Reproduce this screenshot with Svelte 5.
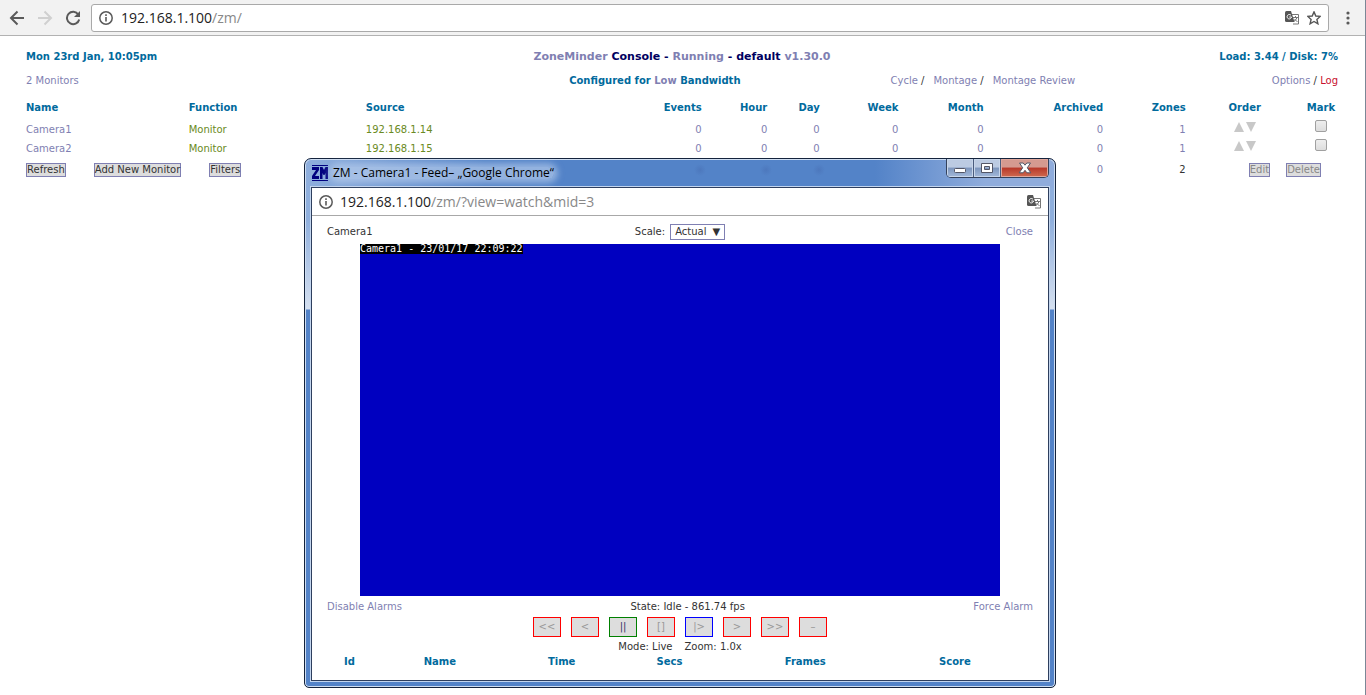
<script lang="ts">
  const monitors = [
    { id: 1, name: 'Camera1', fn: 'Monitor', source: '192.168.1.14', zones: 1 },
    { id: 2, name: 'Camera2', fn: 'Monitor', source: '192.168.1.15', zones: 1 }
  ];

  const periods = ['Events', 'Hour', 'Day', 'Week', 'Month', 'Archived'];

  const dvrControls = [
    { label: '<<', title: 'Fast Rewind', state: 'unavail' },
    { label: '<', title: 'Slow Rewind', state: 'unavail' },
    { label: '||', title: 'Pause', state: 'inactive' },
    { label: '[]', title: 'Stop', state: 'unavail' },
    { label: '|>', title: 'Play', state: 'active' },
    { label: '>', title: 'Slow Forward', state: 'unavail' },
    { label: '>>', title: 'Fast Forward', state: 'unavail' },
    { label: '–', title: 'Zoom Out', state: 'unavail' }
  ];

  let scale = 'Actual';
  let marked: number[] = [];
</script>

<div class="browser">
  <header class="toolbar">
    <button class="icon" aria-label="Back">
      <svg width="16" height="16" viewBox="0 0 16 16"><path d="M15 8H2M8.500 1.500L2 8l6.500 6.500" fill="none" stroke="#5a5a5a" stroke-width="2" /></svg>
    </button>
    <button class="icon" aria-label="Forward">
      <svg width="16" height="16" viewBox="0 0 16 16"><path d="M1 8h13M7.500 1.500L14 8l-6.500 6.500" fill="none" stroke="#d0d0d0" stroke-width="2" /></svg>
    </button>
    <button class="icon" aria-label="Reload">
      <svg width="16" height="16" viewBox="0 0 16 16"><path d="M13.300 4.500A6.200 6.200 0 1 0 14.200 9.500" fill="none" stroke="#5a5a5a" stroke-width="2" /><path d="M15 1v6H9z" fill="#5a5a5a" /></svg>
    </button>
    <div class="omnibox">
      <svg width="14" height="14" viewBox="0 0 14 14"><circle cx="7" cy="7" r="6.200" fill="none" stroke="#5a5a5a" stroke-width="1.500" /><path d="M6.200 6h1.600v4.500H6.200zM6.200 3.300h1.600v1.600H6.200z" fill="#5a5a5a" /></svg>
      <span class="url">192.168.1.100<i>/zm/</i></span>
      <button class="icon" aria-label="Translate">
        <svg width="14" height="14" viewBox="0 0 14 14"><path d="M6 3.500h7.500v9.500H8" fill="#fff" stroke="#777" /><path d="M8 6.500h5M10.500 5v1.500M12 6.500Q11.500 9 8.500 10.500M9.500 8l3 3" fill="none" stroke="#777" /><path d="M0 1.500Q0 0 1.500 0H6l3.500 11H1.500Q0 11 0 9.500z" fill="#555" /><path d="M6 4.300A2.200 2.200 0 1 0 6.500 6H4.300" fill="none" stroke="#fff" /></svg>
      </button>
      <button class="icon" aria-label="Bookmark">
        <svg width="14" height="14" viewBox="0 0 14 14"><path d="M7 .9l1.800 4.100 4.400.4-3.300 3 1 4.400L7 10.500l-3.900 2.300 1-4.400-3.300-3L5.200 5z" fill="none" stroke="#555" stroke-width="1.400" /></svg>
      </button>
    </div>
    <button class="icon" aria-label="Menu">
      <svg width="16" height="16" viewBox="0 0 16 16"><g fill="#5a5a5a"><circle cx="8" cy="3" r="1.600" /><circle cx="8" cy="8" r="1.600" /><circle cx="8" cy="13" r="1.600" /></g></svg>
    </button>
  </header>

  <main>
    <div class="row status">
      <h3>Mon 23rd Jan, 10:05pm</h3>
      <h2><a href="#zm">ZoneMinder</a> Console - <a href="#state">Running</a> - default <a href="#version">v1.30.0</a></h2>
      <h3>Load: 3.44 / Disk: 7%</h3>
    </div>
    <div class="row links">
      <a href="#monitors">2 Monitors</a>
      <h3>Configured for <a href="#bandwidth">Low</a> Bandwidth</h3>
      <div class="end">
        <nav>
          <span><a href="#cycle">Cycle</a> /</span>
          <span><a href="#montage">Montage</a> /</span>
          <a href="#review">Montage Review</a>
        </nav>
        <div><a href="#options">Options</a> / <a class="alert" href="#log">Log</a></div>
      </div>
    </div>

    <table class="console">
      <colgroup>
        <col class="name" /><col class="function" /><col class="source" /><col class="total" /><col class="hour" /><col class="day" />
        <col class="week" /><col class="month" /><col class="archived" /><col class="zones" /><col class="order" /><col class="mark" />
      </colgroup>
      <thead>
        <tr>
          <th>Name</th>
          <th>Function</th>
          <th>Source</th>
          {#each periods as period}
            <th class="num">{period}</th>
          {/each}
          <th class="num">Zones</th>
          <th class="mid">Order</th>
          <th class="mid">Mark</th>
        </tr>
      </thead>
      <tbody>
        {#each monitors as monitor}
          <tr>
            <td><a href="#watch">{monitor.name}</a></td>
            <td><a class="info" href="#function">{monitor.fn}</a></td>
            <td><a class="info" href="#source">{monitor.source}</a></td>
            {#each periods as period}
              <td class="num"><a href="#{period}">0</a></td>
            {/each}
            <td class="num"><a href="#zones">{monitor.zones}</a></td>
            <td class="mid">
              <span class="arrows">
                <button aria-label="Move {monitor.name} up"><svg width="10" height="10"><path d="M5 0l5 10H0z" fill="#c8c8c8" /></svg></button>
                <button aria-label="Move {monitor.name} down"><svg width="10" height="10"><path d="M0 0h10L5 10z" fill="#c8c8c8" /></svg></button>
              </span>
            </td>
            <td class="mid"><input type="checkbox" aria-label="Mark {monitor.name}" value={monitor.id} bind:group={marked} /></td>
          </tr>
        {/each}
      </tbody>
      <tfoot>
        <tr>
          <td colspan="3">
            <div class="buttons">
              <button>Refresh</button>
              <button>Add New Monitor</button>
              <button>Filters</button>
            </div>
          </td>
          {#each periods as period}
            <td class="num"><a href="#total-{period}">0</a></td>
          {/each}
          <td class="num">2</td>
          <td colspan="2">
            <div class="buttons edit">
              <button disabled>Edit</button>
              <button disabled>Delete</button>
            </div>
          </td>
        </tr>
      </tfoot>
    </table>
  </main>
</div>

<section class="window">
  <div class="titlebar">
    <svg width="16" height="16" viewBox="0 0 16 16"><path d="M0 0h16v1H0zM0 15h16v1H0z" fill="#00007f" /><path d="M0 2h7v3L3 11h4v3H0v-3L4 5H0zM8 2h2.500L12 5l1.500-3H16v12h-2.500V8l-1 2h-1l-1-2v6H8z" fill="#00007f" /></svg>
    <span class="caption">ZM - Camera1 - Feed– „Google Chrome“</span>
    <div class="frame-buttons">
      <button aria-label="Minimize"><svg width="12" height="12" viewBox="0 0 12 12"><rect x=".5" y="6.500" width="11" height="4" rx="1" fill="#fff" stroke="#535666" /></svg></button>
      <button aria-label="Maximize"><svg width="12" height="12" viewBox="0 0 12 12"><path d="M.5 1.500h11v9H.5zM3.500 4.500v3h5v-3z" fill="#fff" fill-rule="evenodd" stroke="#535666" /></svg></button>
      <button class="close" aria-label="Close window"><svg width="14" height="12" viewBox="0 0 14 12"><path d="M1.500 1h3.700L7 3.200 8.800 1h3.700L9.300 5.800l3.500 5H8.900L7 8.300l-1.900 2.500H1.200l3.500-5z" fill="#fff" stroke="#535666" /></svg></button>
    </div>
  </div>

  <div class="client">
    <div class="address">
      <svg width="14" height="14" viewBox="0 0 14 14"><circle cx="7" cy="7" r="6.200" fill="none" stroke="#5a5a5a" stroke-width="1.500" /><path d="M6.200 6h1.600v4.500H6.200zM6.200 3.300h1.600v1.600H6.200z" fill="#5a5a5a" /></svg>
      <span class="url">192.168.1.100<i>/zm/?view=watch&amp;mid=3</i></span>
      <button class="icon" aria-label="Translate page">
        <svg width="14" height="14" viewBox="0 0 14 14"><path d="M6 3.500h7.500v9.500H8" fill="#fff" stroke="#777" /><path d="M8 6.500h5M10.500 5v1.500M12 6.500Q11.500 9 8.500 10.500M9.500 8l3 3" fill="none" stroke="#777" /><path d="M0 1.500Q0 0 1.500 0H6l3.500 11H1.500Q0 11 0 9.500z" fill="#555" /><path d="M6 4.300A2.200 2.200 0 1 0 6.500 6H4.300" fill="none" stroke="#fff" /></svg>
      </button>
    </div>

    <div class="row menu">
      <span>Camera1</span>
      <label>
        Scale:
        <span class="picker">
          <select bind:value={scale}>
            <option>Actual</option>
            <option>Max</option>
          </select>
          <span class="arrow">▼</span>
        </span>
      </label>
      <a href="#close">Close</a>
    </div>

    <div class="feed"><span>Camera1 - 23/01/17 22:09:22</span></div>

    <div class="state">
      <a href="#disable">Disable Alarms</a>
      <span>State: Idle - 861.74 fps</span>
      <a href="#force">Force Alarm</a>
    </div>

    <div class="dvr">
      {#each dvrControls as control}
        <button class={control.state} title={control.title} disabled={control.state !== 'inactive'}>{control.label}</button>
      {/each}
    </div>

    <div class="mode">
      <span>Mode: Live</span>
      <span>Zoom: 1.0x</span>
    </div>

    <table class="events">
      <colgroup>
        <col class="id" /><col class="event" /><col class="time" /><col class="secs" /><col class="frames" /><col class="score" />
      </colgroup>
      <thead>
        <tr><th>Id</th><th>Name</th><th>Time</th><th>Secs</th><th>Frames</th><th>Score</th></tr>
      </thead>
    </table>
  </div>
</section>

<style>
  :global(body) {
    background: #fff;
    color: #333;
    font: 10px/14px Verdana, "DejaVu Sans", sans-serif;
  }

  button,
  select {
    font: inherit;
    color: inherit;
    padding: 0;
    border: none;
    border-radius: 0;
    background: none;
  }

  svg {
    display: block;
    flex: none;
  }

  a {
    color: #7f7fb2;
    text-decoration: none;
  }

  h2,
  h3 {
    margin: 0;
    font-size: 10px;
    color: #016a9d;
  }

  h2 {
    font-size: 11px;
    color: #00005f;
  }

  .browser {
    min-height: 100vh;
    box-sizing: border-box;
    border-right: 1px solid #7b8796;
  }

  .toolbar {
    display: flex;
    align-items: center;
    gap: 12px;
    height: 35px;
    padding: 0 9px;
    background: #f2f2f2;
    border-bottom: 1px solid #b2b2b2;
  }

  .omnibox {
    flex: 1;
    display: flex;
    align-items: center;
    gap: 8px;
    height: 26px;
    margin: 0 -1px 0 -2px;
    padding: 0 7px;
    background: #fff;
    border: 1px solid #a9a9a9;
    border-radius: 3px;
  }

  .url {
    flex: 1;
    font: 14px/20px "Open Sans", sans-serif;
    color: #222;
  }

  .url i {
    font-style: normal;
    color: #888;
  }

  main {
    padding: 14px 27px 0 26px;
  }

  .row {
    display: grid;
    grid-template-columns: 1fr auto 1fr;
    align-items: center;
  }

  .row > :last-child {
    text-align: right;
  }

  .status {
    height: 14px;
  }

  .links {
    grid-template-columns: 10fr auto 11fr;
    margin-top: 10px;
  }

  .links > a {
    justify-self: start;
  }

  .links .end {
    display: flex;
    justify-content: space-between;
    padding-left: 150px;
  }

  nav {
    display: flex;
    gap: 9px;
  }

  .alert {
    color: #c8102e;
  }

  .info {
    color: #6a8a22;
  }

  table {
    table-layout: fixed;
    border-collapse: collapse;
  }

  th {
    color: #016a9d;
  }

  th,
  td {
    padding: 0;
    text-align: left;
  }

  .console {
    width: 100%;
    margin-top: 8px;
  }

  .console th {
    height: 24px;
  }

  .console tbody td {
    height: 19px;
  }

  .console tfoot td {
    height: 24px;
  }

  .console .num {
    text-align: right;
  }

  .console .mid {
    text-align: center;
  }

  .name { width: 12.4%; }
  .function { width: 13.5%; }
  .source { width: 17.6%; }
  .total { width: 8%; }
  .hour { width: 5%; }
  .day { width: 4%; }
  .week { width: 6%; }
  .month { width: 6.5%; }
  .archived { width: 9.1%; }
  .zones { width: 6.3%; }
  .order { width: 9%; }
  .mark { width: 2.6%; }

  .arrows {
    display: flex;
    justify-content: center;
    gap: 2px;
    padding-bottom: 5px;
  }

  input {
    appearance: none;
    display: block;
    box-sizing: border-box;
    width: 12px;
    height: 12px;
    margin: 0 auto;
    border: 1px solid #a0a0a0;
    border-radius: 2px;
    background: linear-gradient(#eee, #ddd);
  }

  .console tbody td:last-child {
    height: 12px;
    padding-bottom: 7px;
  }

  .buttons {
    display: flex;
    gap: 28px;
  }

  .buttons button {
    height: 14px;
    line-height: 12px;
    border: 1px solid #7f7fb2;
    background: #ddd;
    white-space: nowrap;
  }

  .buttons button:disabled {
    color: #888;
  }

  .edit {
    justify-content: flex-end;
    gap: 16px;
    padding-right: 17px;
  }

  .window {
    position: absolute;
    top: 158px;
    left: 304px;
    width: 738px;
    padding: 0 6px 6px;
    border: 1px solid #14233c;
    border-radius: 7px 7px 5px 5px;
    background:
      radial-gradient(circle at 395px 11px, #4d78bd, transparent 6px),
      radial-gradient(circle at 461px 11px, #4d78bd, transparent 6px),
      radial-gradient(circle at 514px 11px, #4d78bd, transparent 6px),
      linear-gradient(90deg, #8fafdd, #5383c8 180px, #5383c8 570px, #8facdc 680px) 0 0 / 100% 29px no-repeat,
      linear-gradient(#8fafdd 60px, #d5e0f0 150px, #5383c8 151px);
    box-shadow: inset 0 0 0 1px #cfdef2;
  }

  .titlebar {
    display: flex;
    align-items: center;
    gap: 5px;
    height: 28px;
    padding-left: 1px;
  }

  .caption {
    margin-right: auto;
    font: 12px/12px "Open Sans", sans-serif;
    color: #000;
    background: rgba(190, 210, 238, 0.6);
    border-radius: 6px;
    box-shadow: 0 0 6px 4px rgba(190, 210, 238, 0.6);
  }

  .frame-buttons {
    align-self: flex-start;
    display: flex;
    height: 18px;
    border: 1px solid #34425c;
    border-top: none;
    border-radius: 0 0 5px 5px;
    overflow: hidden;
  }

  .frame-buttons button {
    display: flex;
    align-items: center;
    justify-content: center;
    width: 27px;
    border-right: 1px solid #4a5c7d;
    background: linear-gradient(#bccbe2 45%, #7d96bd 50%, #a3b9da);
    box-shadow: inset 0 0 0 1px #c8d6ea;
  }

  .frame-buttons .close {
    width: 47px;
    border: none;
    background: linear-gradient(#d59a90 45%, #b8392a 50%, #cf6a50);
    box-shadow: inset 0 0 0 1px #dfa79c;
  }

  .client {
    border: 1px solid #2e3f5e;
    background: #fff;
    box-shadow: 0 0 0 1px #c3d5ee;
    padding-bottom: 10px;
  }

  .address {
    display: flex;
    align-items: center;
    gap: 7px;
    height: 27px;
    padding: 0 7px;
    border-bottom: 1px solid #a8a8a8;
  }

  .menu {
    height: 24px;
    padding: 4px 15px 0;
  }

  .menu label {
    display: flex;
    align-items: center;
    gap: 5px;
  }

  .picker {
    position: relative;
  }

  select {
    appearance: none;
    display: block;
    width: 55px;
    height: 16px;
    padding-left: 4px;
    border: 1px solid #7f7fb2;
    background: #fff;
  }

  .arrow {
    position: absolute;
    top: 1px;
    right: 5px;
    pointer-events: none;
  }

  .feed {
    width: 640px;
    height: 352px;
    margin: 0 auto;
    background: #0000c0;
  }

  .feed span {
    display: block;
    width: max-content;
    font: 10px/10px "DejaVu Sans Mono", monospace;
    color: #fff;
    background: #000;
  }

  .state {
    display: flex;
    align-items: center;
    justify-content: space-between;
    height: 21px;
    padding: 0 15px;
  }

  .dvr {
    display: flex;
    justify-content: center;
    gap: 10px;
  }

  .dvr button {
    width: 28px;
    height: 20px;
    border: 1px solid #f00;
    background: #ddd;
    color: #999;
  }

  .dvr .inactive {
    border-color: #008000;
    color: #333366;
  }

  .dvr .active {
    border-color: #00f;
  }

  .mode {
    display: flex;
    justify-content: center;
    gap: 12px;
    margin-top: 3px;
  }

  .events {
    width: 696px;
    margin: 0 auto;
  }

  .events th {
    height: 16px;
    text-align: center;
  }

  .id { width: 5%; }
  .event { width: 21%; }
  .time { width: 14%; }
  .secs { width: 17%; }
  .frames { width: 22%; }
  .score { width: 21%; }
</style>
